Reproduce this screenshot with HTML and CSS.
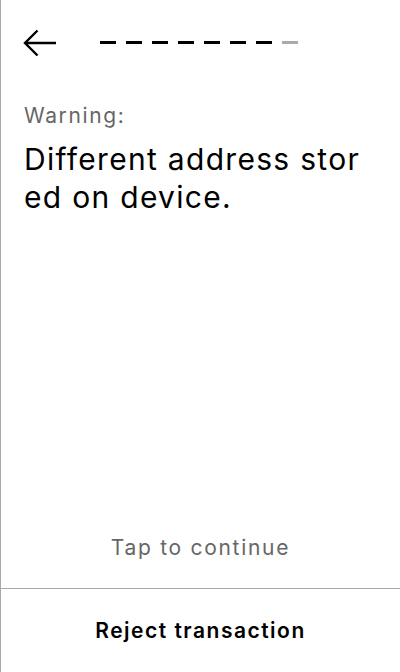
FILE: index.html
```html
<!DOCTYPE html>
<html>
<head>
<meta charset="utf-8">
<link rel="stylesheet" href="styles.css">
</head>
<body>
<div class="screen">
  <header class="header">
    <svg class="back" width="36" height="28" viewBox="0 0 36 28"><path d="M34 14H3 M15.5 1.5 L3 14 L15.5 26.5" fill="none" stroke="#000" stroke-width="2.4"/></svg>
    <div class="progress">
      <span class="dash"></span><span class="dash"></span><span class="dash"></span><span class="dash"></span><span class="dash"></span><span class="dash"></span><span class="dash"></span><span class="dash off"></span>
    </div>
  </header>
  <main class="content">
    <div class="label">Warning:</div>
    <div class="message">Different address stored on device.</div>
  </main>
  <div class="tap">Tap to continue</div>
  <div class="reject">Reject transaction</div>
</div>
</body>
</html>
```
FILE: styles.css
```css
html, body { margin: 0; padding: 0; background: #fff; }
body { font-family: Inter, "Noto Sans", sans-serif; color: #000; }
.screen {
  width: 400px; height: 672px; box-sizing: border-box;
  border-left: 1px solid #aaa;
  display: flex; flex-direction: column;
}
.header {
  display: flex; align-items: center;
  height: 28px; padding: 29px 0 0 21px;
}
.back { display: block; }
.progress { display: flex; gap: 10px; margin-left: 42px; margin-top: -1px; }
.dash { width: 16px; height: 3px; background: #000; }
.dash.off { background: #aaa; }
.content { padding: 47px 36px 0 23px; flex: 1; }
.label { font-size: 21px; line-height: 24px; color: #666; letter-spacing: 1.6px; }
.message { font-size: 30px; line-height: 38px; margin-top: 12px; word-break: break-all; letter-spacing: 1.3px; }
.tap { text-align: center; font-size: 21px; line-height: 24px; color: #666; padding-bottom: 28px; letter-spacing: 1.7px; }
.reject {
  border-top: 1px solid #aaa; height: 83px;
  display: flex; align-items: center; justify-content: center;
  font-size: 21px; font-weight: 600; letter-spacing: 1.5px;
}
```
